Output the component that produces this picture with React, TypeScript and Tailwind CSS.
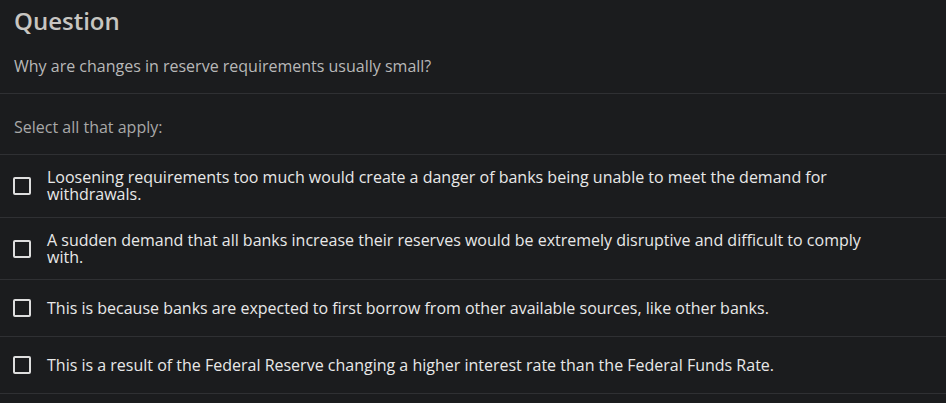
import React from "react";

const options = [
  "Loosening requirements too much would create a danger of banks being unable to meet the demand for withdrawals.",
  "A sudden demand that all banks increase their reserves would be extremely disruptive and difficult to comply with.",
  "This is because banks are expected to first borrow from other available sources, like other banks.",
  "This is a result of the Federal Reserve changing a higher interest rate than the Federal Funds Rate.",
];

export default function App() {
  return (
    <div
      className="min-h-screen w-full bg-[#1b1c1e]"
      style={{ fontFamily: '"Open Sans", "Noto Sans", sans-serif' }}
    >
      <div className="border-b border-[#2f3033] px-[14px] pt-[5px] pb-[17px]">
        <h1 className="text-[24px] leading-[32px] font-semibold text-[#c7c5c1]">Question</h1>
        <p className="mt-[19px] text-[16px] leading-[20px] text-[#b8b8b8]">
          Why are changes in reserve requirements usually small?
        </p>
      </div>
      <div className="border-b border-[#2f3033] px-[14px] pt-[23px] pb-[17px]">
        <p className="text-[16px] leading-[20px] text-[#a8a8a8]">Select all that apply:</p>
      </div>
      {options.map((o, i) => (
        <label
          key={i}
          className={
            i === 0
              ? "flex items-center gap-[16px] border-b border-[#2f3033] py-[14px] pl-[13px] pr-[52px]"
              : i === 1
              ? "flex items-center gap-[16px] border-b border-[#2f3033] pt-[14px] pb-[13px] pl-[13px] pr-[52px]"
              : "flex min-h-[57px] items-center gap-[16px] border-b border-[#2f3033] pl-[13px] pr-[52px]"
          }
        >
          <span className="h-[18px] w-[18px] shrink-0 rounded-[2px] border-2 border-[#dedede]" />
          <span className="text-[16px] leading-[17px] text-[#e8e8e8]">{o}</span>
        </label>
      ))}
    </div>
  );
}
